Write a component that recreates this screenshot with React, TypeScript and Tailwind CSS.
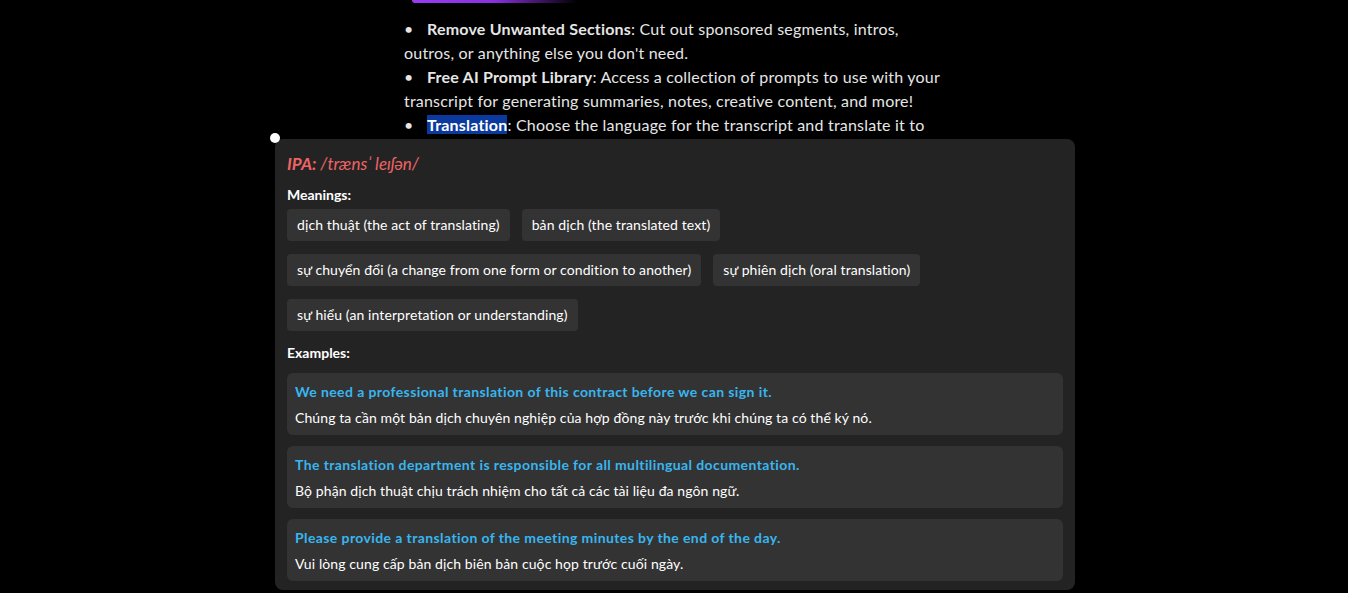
const meanings = [
  "dịch thuật (the act of translating)",
  "bản dịch (the translated text)",
  "sự chuyển đổi (a change from one form or condition to another)",
  "sự phiên dịch (oral translation)",
  "sự hiểu (an interpretation or understanding)",
]

const examples = [
  {
    en: "We need a professional translation of this contract before we can sign it.",
    vi: "Chúng ta cần một bản dịch chuyên nghiệp của hợp đồng này trước khi chúng ta có thể ký nó.",
  },
  {
    en: "The translation department is responsible for all multilingual documentation.",
    vi: "Bộ phận dịch thuật chịu trách nhiệm cho tất cả các tài liệu đa ngôn ngữ.",
  },
  {
    en: "Please provide a translation of the meeting minutes by the end of the day.",
    vi: "Vui lòng cung cấp bản dịch biên bản cuộc họp trước cuối ngày.",
  },
]

const bullet = "before:inline-block before:w-[23px] before:content-['•']"

export default function App() {
  return (
    <div className="relative h-[593px] w-full overflow-hidden bg-black font-['Lato',sans-serif]">
      <div className="absolute left-[412px] top-0 h-[3px] w-[165px] rounded-b-full bg-gradient-to-r from-[#9a3cf2] via-[#8b2fe0] to-transparent" />

      <ul className="ml-[404px] w-[537px] pt-[17px] text-[16px] leading-[24px] tracking-[0.2px] text-[#e6e6e6]">
        <li className={bullet}>
          <b className="font-bold">Remove Unwanted Sections</b>: Cut out sponsored segments, intros, outros, or anything else you don't need.
        </li>
        <li className={bullet}>
          <b className="font-bold">Free AI Prompt Library</b>: Access a collection of prompts to use with your transcript for generating summaries, notes, creative content, and more!
        </li>
        <li className={bullet}>
          <b className="bg-[#0b3a9e] font-bold text-white">Translation</b>: Choose the language for the transcript and translate it to your preferred language.
        </li>
      </ul>

      <div className="absolute left-[270px] top-[133px] z-20 h-[10px] w-[10px] rounded-full bg-white" />

      <div className="absolute left-[275px] top-[139px] z-10 w-[800px] rounded-[8px] bg-[#232323] px-[12px] pb-[9px] pt-[13px] text-[14px] text-white">
        <div className="text-[17px] italic leading-[24px] text-[#ef6464]">
          <b className="font-bold">IPA:</b> /trænsˈ leɪʃən/
        </div>

        <div className="mt-[10px] font-bold leading-[18px]">Meanings:</div>
        <div className="mt-[5px] flex flex-wrap gap-x-[12px] gap-y-[13px] tracking-[0.1px]">
          {meanings.map((m) => (
            <span key={m} className="rounded-[4px] bg-[#333333] px-[10px] py-[7px] leading-[18px]">
              {m}
            </span>
          ))}
        </div>

        <div className="mt-[13px] font-bold leading-[18px]">Examples:</div>
        <div className="mt-[11px] flex flex-col gap-[11px]">
          {examples.map((e) => (
            <div key={e.en} className="rounded-[6px] bg-[#333333] px-[8px] pb-[8px] pt-[10px] leading-[18px]">
              <div className="font-bold tracking-[0.4px] text-[#38b6f0]">{e.en}</div>
              <div className="mt-[8px] tracking-[0.1px]">{e.vi}</div>
            </div>
          ))}
        </div>
      </div>
    </div>
  )
}
